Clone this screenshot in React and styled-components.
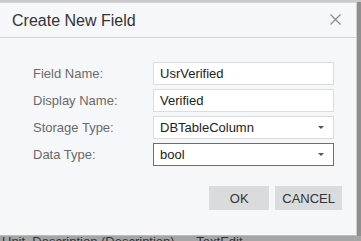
import React from "react";
import styled, { createGlobalStyle } from "styled-components";

const Global = createGlobalStyle`
  html, body { margin: 0; padding: 0; }
  body { font-family: "Liberation Sans", Arial, sans-serif; background: #9a9a9a; }
`;

const Page = styled.div`
  width: 361px;
  height: 241px;
  overflow: hidden;
  background: #c9c9c9;
  padding-top: 2px;
  box-sizing: border-box;
  display: flex;
  flex-direction: column;
`;

const Main = styled.div`
  display: flex;
  background: #8f8f8f;
`;

const Dialog = styled.div`
  width: 357px;
  height: 234px;
  box-sizing: border-box;
  background: #f6f7f9;
  border-top: 1px solid #d6d6d6;
  border-right: 1px solid #cfcfcf;
  border-bottom: 1px solid #bdbdbd;
  display: flex;
  flex-direction: column;
`;

const Header = styled.div`
  height: 34px;
  border-bottom: 1px solid #d4d5d8;
  display: flex;
  align-items: center;
  justify-content: space-between;
  padding: 0 15px 0 12px;
`;

const Title = styled.div`
  font-size: 16px;
  color: #333;
  padding-top: 1px;
`;

const Close = styled.svg`
  width: 11px;
  height: 11px;
  margin-top: -2px;
`;

const Body = styled.div`
  padding: 24px 22px 0 33px;
  display: flex;
  flex-direction: column;
  gap: 4px;
`;

const Row = styled.div`
  display: flex;
  align-items: center;
  height: 23px;
`;

const Label = styled.div`
  width: 120px;
  font-size: 13px;
  color: #6a6a6a;
`;

const Field = styled.div`
  flex: 1;
  height: 23px;
  box-sizing: border-box;
  background: #fff;
  border: 1px solid ${(p) => (p.$focused ? "#2b7fd3" : "#dcdcdc")};
  display: flex;
  align-items: center;
  justify-content: space-between;
  padding: 0 9px 0 6px;
  font-size: 13px;
  color: #222;
`;

const Arrow = styled.span`
  width: 0;
  height: 0;
  border-left: 3px solid transparent;
  border-right: 3px solid transparent;
  border-top: 3px solid #555;
`;

const Footer = styled.div`
  display: flex;
  justify-content: flex-end;
  gap: 6px;
  padding: 20px 14px 0 0;
`;

const Button = styled.button`
  min-width: 60px;
  height: 24px;
  padding: 0 7px;
  border: none;
  background: #dadbdd;
  color: #333;
  font-family: "Liberation Sans", Arial, sans-serif;
  font-size: 13px;
  cursor: pointer;
`;

const Behind = styled.div`
  flex: 1;
  overflow: hidden;
  background: #a5a5a5;
  font-size: 13px;
  line-height: 13px;
  color: #333;
  white-space: nowrap;
  padding-left: 2px;
`;

const BehindText = styled.div`
  margin-top: -1px;
`;

export default function App() {
  return (
    <>
      <Global />
      <Page>
        <Main>
          <Dialog>
            <Header>
              <Title>Create New Field</Title>
              <Close viewBox="0 0 11 11">
                <path d="M0.5 0.5 L10.5 10.5 M10.5 0.5 L0.5 10.5" stroke="#8a8a8a" strokeWidth="1.2" fill="none" />
              </Close>
            </Header>
            <Body>
              <Row>
                <Label>Field Name:</Label>
                <Field>UsrVerified</Field>
              </Row>
              <Row>
                <Label>Display Name:</Label>
                <Field>Verified</Field>
              </Row>
              <Row>
                <Label>Storage Type:</Label>
                <Field>
                  DBTableColumn
                  <Arrow />
                </Field>
              </Row>
              <Row>
                <Label>Data Type:</Label>
                <Field $focused>
                  bool
                  <Arrow />
                </Field>
              </Row>
            </Body>
            <Footer>
              <Button>OK</Button>
              <Button>CANCEL</Button>
            </Footer>
          </Dialog>
        </Main>
        <Behind>
          <BehindText>Unit&nbsp;&nbsp;Description (Description)&nbsp;&nbsp;&nbsp;&nbsp;&nbsp;&nbsp;TextEdit</BehindText>
        </Behind>
      </Page>
    </>
  );
}
